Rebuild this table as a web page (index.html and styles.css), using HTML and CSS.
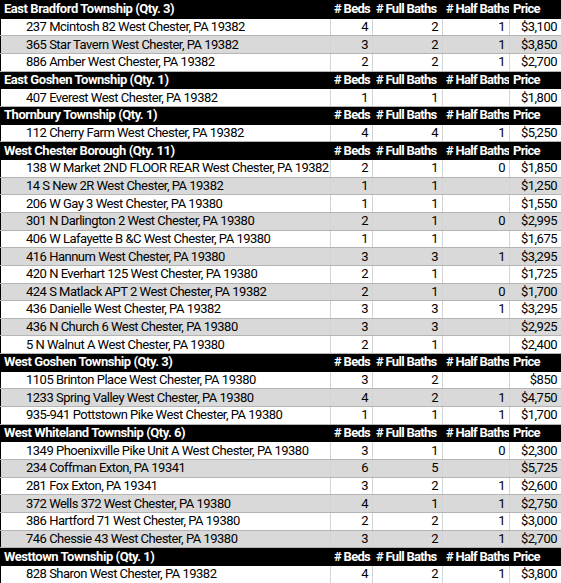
FILE: index.html
```html
<!DOCTYPE html>
<html>
<head>
<meta charset="utf-8">
<link rel="stylesheet" href="styles.css">
</head>
<body>
<table class="listings">
<colgroup>
<col class="c-addr"><col class="c-beds"><col class="c-full"><col class="c-half"><col class="c-price">
</colgroup>
<tbody>
<tr class="grp"><th class="name">East Bradford Township (Qty. 3)</th><th># Beds</th><th># Full Baths</th><th># Half Baths</th><th>Price</th></tr>
<tr><td class="addr">237 Mcintosh 82 West Chester, PA 19382</td><td>4</td><td>2</td><td>1</td><td>$3,100</td></tr>
<tr class="alt"><td class="addr">365 Star Tavern West Chester, PA 19382</td><td>3</td><td>2</td><td>1</td><td>$3,850</td></tr>
<tr><td class="addr">886 Amber West Chester, PA 19382</td><td>2</td><td>2</td><td>1</td><td>$2,700</td></tr>

<tr class="grp"><th class="name">East Goshen Township (Qty. 1)</th><th># Beds</th><th># Full Baths</th><th># Half Baths</th><th>Price</th></tr>
<tr><td class="addr">407 Everest West Chester, PA 19382</td><td>1</td><td>1</td><td></td><td>$1,800</td></tr>

<tr class="grp"><th class="name">Thornbury Township (Qty. 1)</th><th># Beds</th><th># Full Baths</th><th># Half Baths</th><th>Price</th></tr>
<tr><td class="addr">112 Cherry Farm West Chester, PA 19382</td><td>4</td><td>4</td><td>1</td><td>$5,250</td></tr>

<tr class="grp"><th class="name">West Chester Borough (Qty. 11)</th><th># Beds</th><th># Full Baths</th><th># Half Baths</th><th>Price</th></tr>
<tr><td class="addr">138 W Market 2ND FLOOR REAR West Chester, PA 19382</td><td>2</td><td>1</td><td>0</td><td>$1,850</td></tr>
<tr class="alt"><td class="addr">14 S New 2R West Chester, PA 19382</td><td>1</td><td>1</td><td></td><td>$1,250</td></tr>
<tr><td class="addr">206 W Gay 3 West Chester, PA 19380</td><td>1</td><td>1</td><td></td><td>$1,550</td></tr>
<tr class="alt"><td class="addr">301 N Darlington 2 West Chester, PA 19380</td><td>2</td><td>1</td><td>0</td><td>$2,995</td></tr>
<tr><td class="addr">406 W Lafayette B &amp;C West Chester, PA 19380</td><td>1</td><td>1</td><td></td><td>$1,675</td></tr>
<tr class="alt"><td class="addr">416 Hannum West Chester, PA 19380</td><td>3</td><td>3</td><td>1</td><td>$3,295</td></tr>
<tr><td class="addr">420 N Everhart 125 West Chester, PA 19380</td><td>2</td><td>1</td><td></td><td>$1,725</td></tr>
<tr class="alt"><td class="addr">424 S Matlack APT 2 West Chester, PA 19382</td><td>2</td><td>1</td><td>0</td><td>$1,700</td></tr>
<tr><td class="addr">436 Danielle West Chester, PA 19382</td><td>3</td><td>3</td><td>1</td><td>$3,295</td></tr>
<tr class="alt"><td class="addr">436 N Church 6 West Chester, PA 19380</td><td>3</td><td>3</td><td></td><td>$2,925</td></tr>
<tr><td class="addr">5 N Walnut A West Chester, PA 19380</td><td>2</td><td>1</td><td></td><td>$2,400</td></tr>

<tr class="grp"><th class="name">West Goshen Township (Qty. 3)</th><th># Beds</th><th># Full Baths</th><th># Half Baths</th><th>Price</th></tr>
<tr><td class="addr">1105 Brinton Place West Chester, PA 19380</td><td>3</td><td>2</td><td></td><td>$850</td></tr>
<tr class="alt"><td class="addr">1233 Spring Valley West Chester, PA 19380</td><td>4</td><td>2</td><td>1</td><td>$4,750</td></tr>
<tr><td class="addr">935-941 Pottstown Pike West Chester, PA 19380</td><td>1</td><td>1</td><td>1</td><td>$1,700</td></tr>

<tr class="grp"><th class="name">West Whiteland Township (Qty. 6)</th><th># Beds</th><th># Full Baths</th><th># Half Baths</th><th>Price</th></tr>
<tr><td class="addr">1349 Phoenixville Pike Unit A West Chester, PA 19380</td><td>3</td><td>1</td><td>0</td><td>$2,300</td></tr>
<tr class="alt"><td class="addr">234 Coffman Exton, PA 19341</td><td>6</td><td>5</td><td></td><td>$5,725</td></tr>
<tr><td class="addr">281 Fox Exton, PA 19341</td><td>3</td><td>2</td><td>1</td><td>$2,600</td></tr>
<tr class="alt"><td class="addr">372 Wells 372 West Chester, PA 19380</td><td>4</td><td>1</td><td>1</td><td>$2,750</td></tr>
<tr><td class="addr">386 Hartford 71 West Chester, PA 19380</td><td>2</td><td>2</td><td>1</td><td>$3,000</td></tr>
<tr class="alt"><td class="addr">746 Chessie 43 West Chester, PA 19380</td><td>3</td><td>2</td><td>1</td><td>$2,700</td></tr>

<tr class="grp"><th class="name">Westtown Township (Qty. 1)</th><th># Beds</th><th># Full Baths</th><th># Half Baths</th><th>Price</th></tr>
<tr><td class="addr">828 Sharon West Chester, PA 19382</td><td>4</td><td>2</td><td>1</td><td>$3,800</td></tr>
</tbody>
</table>
</body>
</html>
```
FILE: styles.css
```css
html, body {
  margin: 0;
  padding: 0;
  background: #ffffff;
}

.listings {
  border-collapse: collapse;
  table-layout: fixed;
  width: 561px;
  font-family: Roboto, "Liberation Sans", sans-serif;
  font-size: 13px;
  color: #000;
  border: 1px solid #000;
}

.c-addr { width: 330px; }
.c-beds { width: 42px; }
.c-full { width: 70px; }
.c-half { width: 67px; }
.c-price { width: 52px; }

.listings tr {
  height: 17.667px;
}

.listings td, .listings th {
  padding: 0 4px 0 3px;
  white-space: nowrap;
  overflow: hidden;
  line-height: 16px;
}

.listings td {
  text-align: right;
  letter-spacing: -0.5px;
  border-top: 1px solid #b4b4b4;
  border-bottom: 1px solid #b4b4b4;
  border-left: 1px solid #d4d4d4;
  border-right: 1px solid #d4d4d4;
}

.listings td.addr {
  text-align: left;
  padding-left: 25px;
  border-left: 1px solid #000;
}

.listings td:last-child {
  border-right: 1px solid #000;
}

.alt td {
  background: #d9d9d9;
}

.grp th {
  background: #000;
  color: #fff;
  font-weight: 700;
  text-align: left;
  border: 1px solid #000;
  padding-right: 0;
  letter-spacing: -0.7px;
}

.grp th.name {
  padding-left: 3px;
  letter-spacing: -0.45px;
}
```
